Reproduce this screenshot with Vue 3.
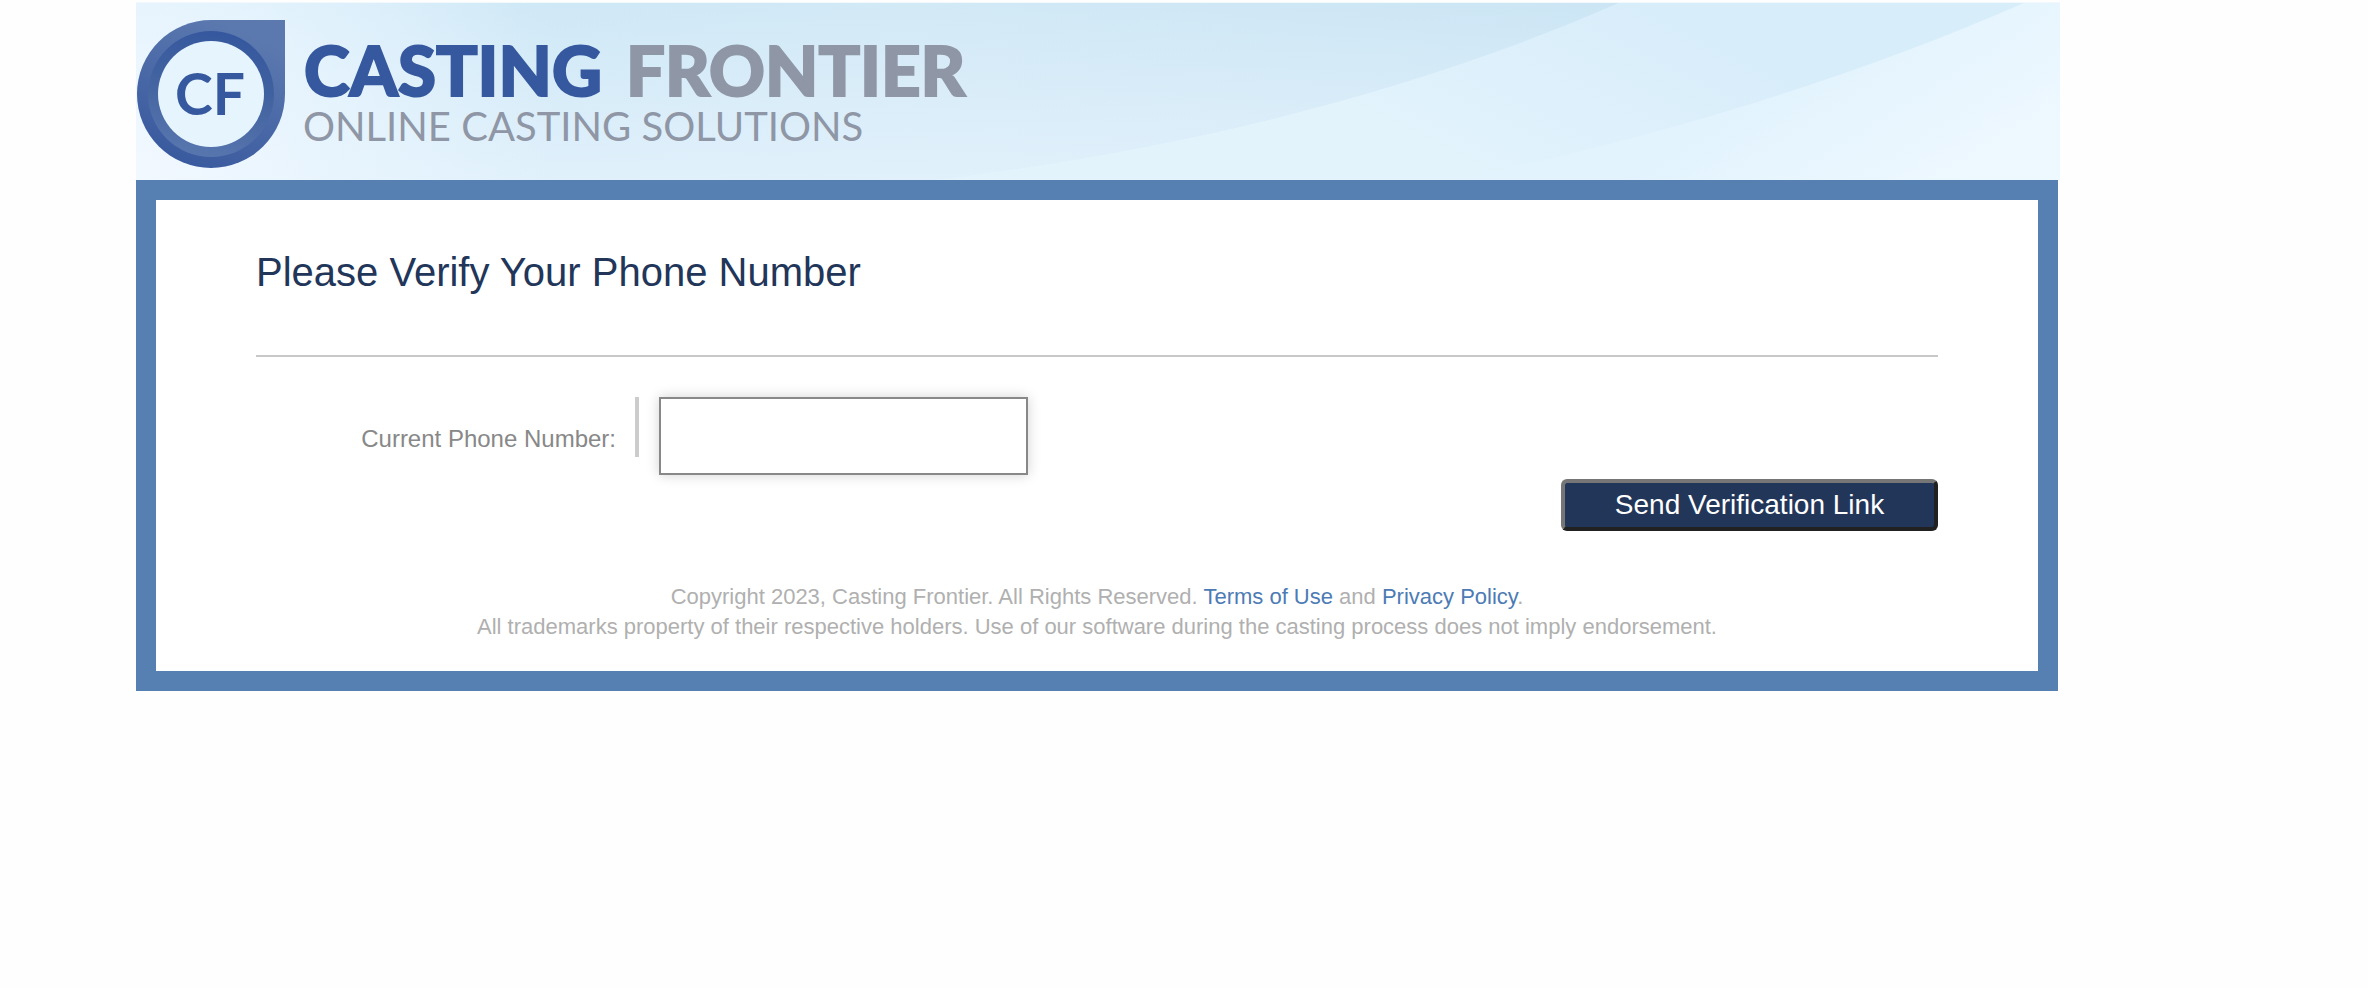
<script setup>
import { ref } from 'vue'

const phone = ref('')
const year = 2023
</script>

<template>
  <div class="page">
    <header class="banner">
      <svg class="waves" viewBox="0 0 1924 178" preserveAspectRatio="none" aria-hidden="true">
        <defs>
          <linearGradient id="sky" x1="0" y1="0" x2="1" y2="0">
            <stop offset="0" stop-color="#ddf0fc" />
            <stop offset="0.22" stop-color="#cfe8f6" />
            <stop offset="0.4" stop-color="#d2e9f6" />
            <stop offset="0.8" stop-color="#cbe5f4" />
          </linearGradient>
          <linearGradient id="mist" x1="0" y1="0" x2="0" y2="1">
            <stop offset="0" stop-color="#e6f3fd" stop-opacity="0" />
            <stop offset="1" stop-color="#e6f3fd" stop-opacity="0.75" />
          </linearGradient>
          <linearGradient id="middle" gradientUnits="userSpaceOnUse" x1="1500" y1="0" x2="1400" y2="200">
            <stop offset="0" stop-color="#d8edfa" />
            <stop offset="1" stop-color="#e2f3fc" />
          </linearGradient>
          <linearGradient id="front" gradientUnits="userSpaceOnUse" x1="1700" y1="40" x2="1800" y2="200">
            <stop offset="0" stop-color="#e2f3fd" />
            <stop offset="1" stop-color="#eef8ff" />
          </linearGradient>
          <radialGradient id="corner" gradientUnits="userSpaceOnUse" cx="0" cy="178" r="420">
            <stop offset="0" stop-color="#f2f8ff" />
            <stop offset="1" stop-color="#e8f6fe" stop-opacity="0" />
          </radialGradient>
        </defs>
        <rect width="1924" height="178" fill="url(#sky)" />
        <rect width="1924" height="178" fill="url(#mist)" />
        <rect width="1924" height="178" fill="url(#corner)" />
        <path d="M800 178 Q1190 130 1485 0 H1924 V178 Z" fill="url(#middle)" />
        <path d="M1320 178 Q1640 110 1890 0 H1924 V178 Z" fill="url(#front)" />
        <rect width="1924" height="1" fill="#f1f9fd" />
      </svg>
      <svg class="logo" viewBox="0 0 840 178" role="img" aria-label="Casting Frontier Online Casting Solutions">
        <defs>
          <linearGradient id="drop" x1="0.8" y1="0.1" x2="0.4" y2="1">
            <stop offset="0" stop-color="#5c79af" />
            <stop offset="1" stop-color="#3a5a9f" />
          </linearGradient>
          <linearGradient id="ring" x1="0.6" y1="0" x2="0.4" y2="1">
            <stop offset="0" stop-color="#35579e" />
            <stop offset="0.4" stop-color="#40619f" />
            <stop offset="1" stop-color="#5876ae" />
          </linearGradient>
        </defs>
        <path d="M75 18 H149 V92 A74 74 0 1 1 75 18 Z" fill="url(#drop)" />
        <circle cx="75" cy="92" r="63" fill="url(#ring)" />
        <circle cx="75" cy="92" r="53" fill="#e6f4fe" />
        <text class="mark" x="39" y="113">CF</text>
        <text class="name" x="168" y="94">CASTING</text>
        <text class="name grey" x="490" y="94">FRONTIER</text>
        <text class="tag grey" x="167" y="139">ONLINE CASTING SOLUTIONS</text>
      </svg>
    </header>

    <main class="panel">
      <h1>Please Verify Your Phone Number</h1>
      <form @submit.prevent>
        <div class="row">
          <label for="phone">Current Phone Number:</label>
          <input id="phone" v-model="phone" type="tel" />
        </div>
        <button type="submit">Send Verification Link</button>
      </form>
      <footer>
        <p>
          Copyright {{ year }}, Casting Frontier. All Rights Reserved.
          <a href="#terms">Terms of Use</a> and <a href="#privacy">Privacy Policy</a>.
        </p>
        <p>
          All trademarks property of their respective holders. Use of our software during the
          casting process does not imply endorsement.
        </p>
      </footer>
    </main>
  </div>
</template>

<style>
body {
  margin: 0;
  background: #fefefe;
}
</style>

<style scoped>
.page {
  padding: 2px 310px 40px 136px;
  font-family: "Liberation Sans", Arial, Helvetica, sans-serif;
}

.banner {
  position: relative;
  display: flex;
  height: 178px;
  margin-right: -2px;
}

.waves {
  position: absolute;
  inset: 0;
  width: 100%;
  height: 100%;
}

.logo {
  position: relative;
  flex: none;
  width: 840px;
  height: 178px;
}

.logo text {
  font-family: Lato, "Liberation Sans", sans-serif;
  fill: #36589f;
}

.logo .mark {
  font-size: 57px;
  font-weight: 700;
}

.logo .name {
  font-size: 69px;
  font-weight: 900;
  stroke: #36589f;
  stroke-width: 2px;
}

.logo .tag {
  font-size: 40px;
}

.logo .grey {
  fill: #8f96a5;
}

.logo .name.grey {
  stroke: #8f96a5;
}

.panel {
  border: 20px solid #567fb2;
  padding: 48px 100px 29px;
  background: #fff;
}

h1 {
  margin: 0 0 40px;
  padding-bottom: 59px;
  border-bottom: 2px solid #c8c8c8;
  color: #22365a;
  font-size: 40px;
  font-weight: 400;
  line-height: 48px;
}

form {
  display: flex;
  flex-direction: column;
}

.row {
  display: flex;
  align-items: flex-start;
  gap: 20px;
  margin-bottom: 4px;
}

label {
  box-sizing: border-box;
  width: 383px;
  height: 60px;
  padding: 28px 19px 0 0;
  border-right: 4px solid #ccc;
  color: #888;
  font-size: 24px;
  line-height: 28px;
  text-align: right;
}

input {
  box-sizing: border-box;
  width: 369px;
  height: 78px;
  padding: 0 20px;
  border: 2px solid #888;
  background: #fff;
  box-shadow: 0 0 12px rgba(0, 0, 0, 0.18);
  color: #555;
  font: inherit;
  font-size: 24px;
}

button {
  align-self: flex-end;
  width: 377px;
  height: 52px;
  padding: 0;
  border: 4px solid;
  border-color: #767676 #212121 #212121 #767676;
  border-radius: 6px;
  background: #22365a;
  color: #fff;
  font: inherit;
  font-size: 28px;
  line-height: 40px;
}

footer {
  margin-top: 51px;
  color: #b0b0b0;
  font-size: 22px;
  line-height: 30px;
  text-align: center;
}

footer p {
  margin: 0;
}

a {
  color: #4c7bb5;
  text-decoration: none;
}
</style>
